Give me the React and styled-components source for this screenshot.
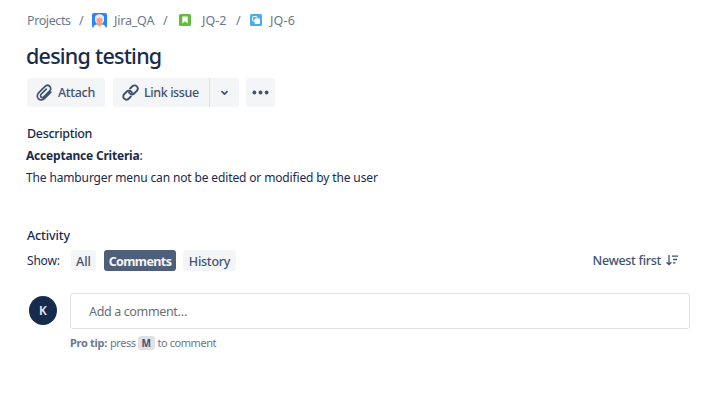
import React from "react";
import styled, { createGlobalStyle } from "styled-components";

const GlobalStyle = createGlobalStyle`
  * { box-sizing: border-box; }
  body { margin: 0; background: #fff; }
`;

const Page = styled.main`
  width: 722px;
  height: 407px;
  padding: 10px 32px 0 27px;
  overflow: hidden;
  background: #fff;
  color: #172b4d;
  font-family: "Noto Sans", "Open Sans", sans-serif;
  font-size: 12px;
  white-space: nowrap;
`;

const Breadcrumbs = styled.nav`
  display: flex;
  align-items: center;
  height: 20px;
  color: #6b778c;
  font-size: 12.5px;
`;

const Crumb = styled.span`
  flex: none;
  width: ${(p) => p.$width}px;
  letter-spacing: ${(p) => p.$spacing || 0}px;
  line-height: 20px;
  padding-top: 1px;
`;

const Slash = styled.span`
  flex: none;
  width: ${(p) => p.$width || 21}px;
  padding: 1px 0 0 ${(p) => p.$inset || 8}px;
  line-height: 20px;
`;

const CrumbIcon = styled.svg`
  display: block;
  flex: none;
  width: ${(p) => p.$size}px;
  height: ${(p) => p.$size}px;
  margin-right: ${(p) => p.$gap}px;
`;

const Title = styled.h1`
  margin: 11px 0 0 -1px;
  height: 30px;
  line-height: 30px;
  font-size: 21.5px;
  font-weight: 500;
  letter-spacing: -0.77px;
`;

const Toolbar = styled.div`
  display: flex;
  height: 29px;
  margin-top: 7px;
`;

const Button = styled.button`
  display: flex;
  align-items: center;
  width: ${(p) => p.$width}px;
  height: 29px;
  margin: 0 ${(p) => p.$gap || 0}px 0 0;
  padding: 0 0 0 ${(p) => p.$inset}px;
  border: 0;
  border-left: ${(p) => (p.$divided ? "1px solid #dcdfe5" : "0")};
  border-radius: ${(p) => p.$radius || "3px"};
  background: #f4f5f7;
  color: #42526e;
  font: 500 12.5px/29px "Noto Sans", sans-serif;
  letter-spacing: ${(p) => p.$spacing || 0}px;
`;

const ButtonIcon = styled.svg`
  display: block;
  flex: none;
  width: ${(p) => p.$size}px;
  height: ${(p) => p.$size}px;
  margin-right: ${(p) => p.$gap || 0}px;
`;

const SectionTitle = styled.h2`
  margin: ${(p) => p.$top}px 0 0;
  height: 20px;
  line-height: 20px;
  font-size: 12.5px;
  font-weight: 500;
  letter-spacing: ${(p) => p.$spacing}px;
`;

const Paragraph = styled.p`
  margin: 2px 0 0 -1px;
  height: 20px;
  line-height: 20px;
  letter-spacing: ${(p) => p.$spacing}px;
`;

const FilterRow = styled.div`
  display: flex;
  align-items: center;
  height: 21px;
  margin-top: 4px;
`;

const FilterLabel = styled.span`
  width: 44px;
  line-height: 20px;
  letter-spacing: -0.2px;
`;

const Filter = styled.button`
  width: ${(p) => p.$width}px;
  height: 21px;
  margin: 0 ${(p) => p.$gap}px 0 0;
  padding: 2px 0 0;
  border: 0;
  border-radius: 3px;
  background: ${(p) => (p.$active ? "#505f79" : "#f4f5f7")};
  color: ${(p) => (p.$active ? "#f4f5f7" : "#42526e")};
  font: ${(p) => (p.$active ? 700 : 500)} 12.5px/19px "Noto Sans", sans-serif;
  letter-spacing: ${(p) => p.$spacing || 0}px;
`;

const Sort = styled.div`
  display: flex;
  align-items: center;
  gap: 5px;
  margin-left: auto;
  margin-right: 11px;
  color: #42526e;
  font-size: 12.5px;
  font-weight: 500;
  letter-spacing: -0.3px;
`;

const Composer = styled.section`
  display: flex;
  margin-top: 22px;
`;

const Avatar = styled.div`
  width: 28px;
  height: 29px;
  margin: 3px 13px 0 2px;
  border-radius: 50%;
  background: #172b4d;
  color: #e8ebf0;
  text-align: center;
  font: 600 12px/29px "Noto Sans", sans-serif;
`;

const Editor = styled.div`
  flex: 1;
`;

const CommentBox = styled.div`
  height: 36px;
  padding-left: 18px;
  border: 1px solid #dfe1e6;
  border-radius: 3px;
  color: #6b6e76;
  font-size: 12.5px;
  line-height: 35px;
  letter-spacing: -0.36px;
`;

const Tip = styled.div`
  display: flex;
  align-items: center;
  height: 16px;
  margin-top: 6px;
  color: #6b778c;
  font-size: 11px;
  line-height: 16px;
  letter-spacing: -0.45px;
`;

const TipLead = styled.strong`
  width: 40px;
  letter-spacing: -0.3px;
`;

const Key = styled.kbd`
  width: 17px;
  height: 14px;
  margin: 0 3px 0 2px;
  border-radius: 3px;
  background: #dfe1e6;
  color: #42526e;
  text-align: center;
  font: 700 10px/14px "Noto Sans", sans-serif;
`;

export default function App() {
  return (
    <Page>
      <GlobalStyle />
      <Breadcrumbs>
        <Crumb $width={44} $spacing={-0.4}>Projects</Crumb>
        <Slash>/</Slash>
        <CrumbIcon $size={15} $gap={7} viewBox="0 0 15 15">
          <rect width="15" height="15" rx="2" fill="#2684ff" />
          <path d="M3 8V4.6C3 2.6 5 1.2 7.5 1.2S12 2.6 12 4.6V8l-1.3 2.5H4.3Z" fill="#f5e9ea" />
          <path d="M1.2 15c.2-2.2 1.6-3.4 3.9-3.6h4.8c2.3.2 3.7 1.4 3.9 3.6Z" fill="#fff" />
          <path d="M4.4 5.4c1.8-.1 2.7-.8 3.1-1.3.5.6 1.4 1.2 3.1 1.3v2.4c0 1.8-1.2 3.2-3.1 3.2S4.4 9.6 4.4 7.8Z" fill="#ffab91" />
          <path d="M4.8 10.2h5.4v1.6l-2.7 2-2.7-2Z" fill="#ff9d83" />
          <path d="M5.6 6.8h1m1.8 0h1M6.7 9h1.6" stroke="#c76055" strokeWidth=".6" />
        </CrumbIcon>
        <Crumb $width={42} $spacing={-0.2}>Jira_QA</Crumb>
        <Slash $inset={7} $width={23}>/</Slash>
        <CrumbIcon $size={12} $gap={11} viewBox="0 0 12 12">
          <rect width="12" height="12" rx="1.5" fill="#63ba3c" />
          <path d="M3.3 2.6h5.4v6.8L6 7.2 3.3 9.4Z" fill="#fff" />
        </CrumbIcon>
        <Crumb $width={27}>JQ-2</Crumb>
        <Slash $inset={7}>/</Slash>
        <CrumbIcon $size={12} $gap={8} viewBox="0 0 12 12">
          <rect width="12" height="12" rx="1.5" fill="#4bade8" />
          <rect x="2.6" y="2.6" width="4.4" height="4.4" rx=".6" fill="none" stroke="#fff" />
          <rect x="4.6" y="4.6" width="5.4" height="5.4" rx=".8" fill="#fff" />
        </CrumbIcon>
        <Crumb $width={27} $spacing={0.2}>JQ-6</Crumb>
      </Breadcrumbs>
      <Title>desing testing</Title>
      <Toolbar>
        <Button $width={78} $gap={8} $inset={9} $spacing={-0.33}>
          <ButtonIcon $size={17} $gap={5} viewBox="0 0 24 24" fill="none" stroke="currentColor" strokeWidth="2.4" strokeLinecap="round" strokeLinejoin="round">
            <path d="m21 11.6-8.8 8.8c-2.6 2.6-6.3 2.9-8.7.5s-2.1-6.1.5-8.7l8.5-8.5c2.1-2.1 5-2.3 6.9-.4s1.7 4.8-.4 6.9l-8 8c-1.2 1.2-2.8 1.3-3.9.2s-1-2.7.2-3.9l7.2-7.2" />
          </ButtonIcon>
          Attach
        </Button>
        <Button $width={96} $inset={9} $radius="3px 0 0 3px" $spacing={-0.4}>
          <ButtonIcon $size={17} $gap={5} viewBox="0 0 24 24" fill="none" stroke="currentColor" strokeWidth="2.7" strokeLinecap="round">
            <path d="m11.5 6.3 2.8-2.8c2-2 4.8-2 6.6-.2s1.8 4.6-.2 6.6l-3.2 3.2c-2 2-4.8 2-6.6.2-.6-.6-1-1.2-1.1-2" />
            <path d="m12.5 17.7-2.8 2.8c-2 2-4.8 2-6.6.2s-1.8-4.6.2-6.6l3.2-3.2c2-2 4.8-2 6.6-.2.6.6 1 1.2 1.1 2" />
          </ButtonIcon>
          Link issue
        </Button>
        <Button $width={30} $gap={7} $inset={8} $divided $radius="0 3px 3px 0" aria-label="More link options">
          <ButtonIcon $size={13} viewBox="0 0 13 13" fill="none" stroke="currentColor" strokeWidth="1.8" strokeLinecap="round" strokeLinejoin="round">
            <path d="m4 5.7 2.5 2.4L9 5.7" />
          </ButtonIcon>
        </Button>
        <Button $width={29} $inset={6} aria-label="More actions">
          <ButtonIcon $size={17} viewBox="0 0 17 17" fill="currentColor">
            <circle cx="2.4" cy="8.5" r="1.9" />
            <circle cx="8.5" cy="8.5" r="1.9" />
            <circle cx="14.6" cy="8.5" r="1.9" />
          </ButtonIcon>
        </Button>
      </Toolbar>
      <SectionTitle $top={17} $spacing={-0.32}>Description</SectionTitle>
      <Paragraph $spacing={-0.2}><strong>Acceptance Criteria</strong>:</Paragraph>
      <Paragraph $spacing={-0.14}>The hamburger menu can not be edited or modified by the user</Paragraph>
      <SectionTitle $top={38} $spacing={-0.12}>Activity</SectionTitle>
      <FilterRow>
        <FilterLabel>Show:</FilterLabel>
        <Filter $width={25} $gap={8}>All</Filter>
        <Filter $width={72} $gap={7} $active $spacing={-0.6}>Comments</Filter>
        <Filter $width={53} $gap={0} $spacing={-0.25}>History</Filter>
        <Sort>
          Newest first
          <ButtonIcon $size={13} viewBox="0 0 13 13" fill="none" stroke="currentColor" strokeWidth="1.3">
            <path d="M3 1v9.5M.6 8.3 3 10.7l2.4-2.4M6 2.2h6M7 5.5h4M7 8.8h2.5" />
          </ButtonIcon>
        </Sort>
      </FilterRow>
      <Composer>
        <Avatar>K</Avatar>
        <Editor>
          <CommentBox>Add a comment…</CommentBox>
          <Tip><TipLead>Pro tip:</TipLead>press<Key>M</Key>to comment</Tip>
        </Editor>
      </Composer>
    </Page>
  );
}
